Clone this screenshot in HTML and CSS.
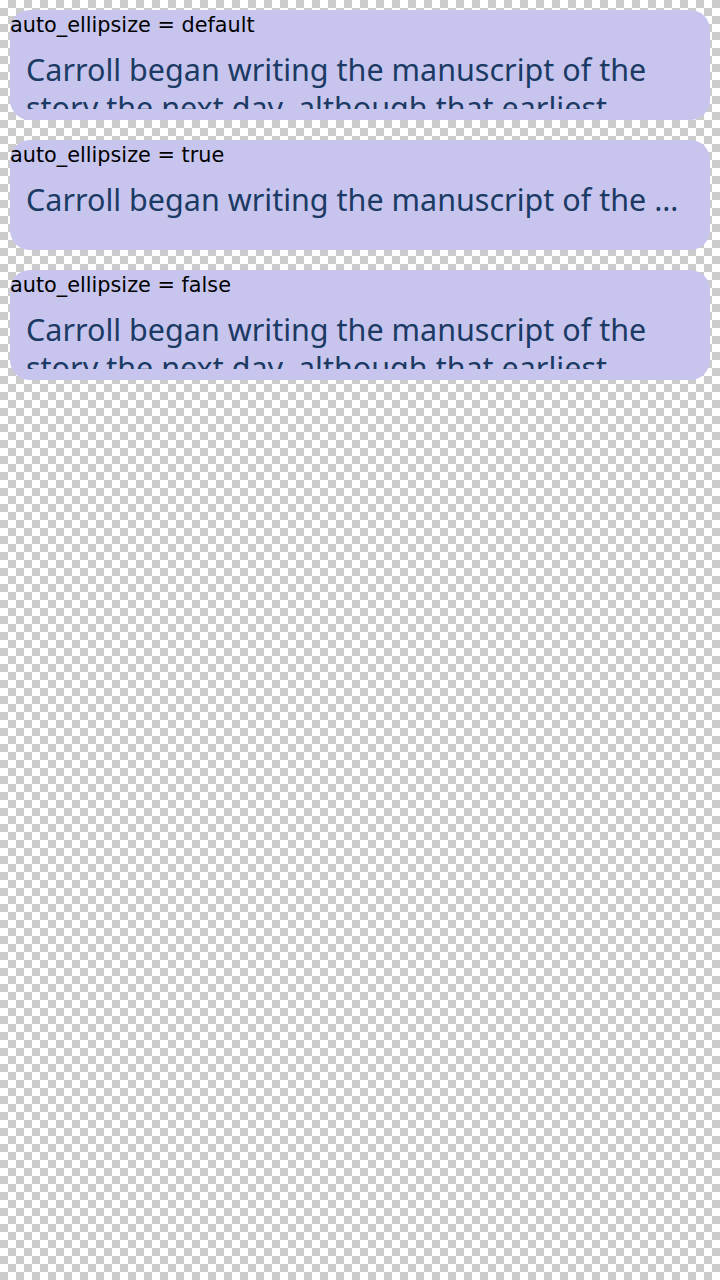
FILE: index.html
```html
<!DOCTYPE html>
<html>
<head>
<meta charset="utf-8">
<link rel="stylesheet" href="styles.css">
</head>
<body>
<div class="stack">
  <div class="card">
    <div class="label">auto_ellipsize = default</div>
    <div class="text">Carroll began writing the manuscript of the story the next day, although that earliest version has since been lost.</div>
  </div>
  <div class="card">
    <div class="label">auto_ellipsize = true</div>
    <div class="text single">Carroll began writing the manuscript of the …</div>
  </div>
  <div class="card">
    <div class="label">auto_ellipsize = false</div>
    <div class="text">Carroll began writing the manuscript of the story the next day, although that earliest version has since been lost.</div>
  </div>
</div>
</body>
</html>
```
FILE: styles.css
```css
html {
  background-color: #ffffff;
  background-image: conic-gradient(#cccccc 25%, #ffffff 0 50%, #cccccc 0 75%, #ffffff 0);
  background-size: 16px 16px;
  min-height: 100%;
}
body {
  margin: 0;
  padding: 10px;
  font-family: "Noto Sans", sans-serif;
}
.stack {
  display: flex;
  flex-direction: column;
  gap: 20px;
}
.card {
  height: 110px;
  box-sizing: border-box;
  background: #c7c5ee;
  border-radius: 20px;
  display: flex;
  flex-direction: column;
  padding-bottom: 11px;
}
.label {
  font-family: "DejaVu Sans", sans-serif;
  font-size: 20.8px;
  line-height: 24px;
  padding-top: 3px;
  color: #000000;
  white-space: nowrap;
}
.text {
  flex: 1;
  margin-top: 13px;
  padding: 0 14px 0 16px;
  overflow: hidden;
  font-family: "Noto Sans", sans-serif;
  font-size: 30.5px;
  line-height: 38px;
  color: #1b3a64;
}
.single {
  white-space: nowrap;
}
```
